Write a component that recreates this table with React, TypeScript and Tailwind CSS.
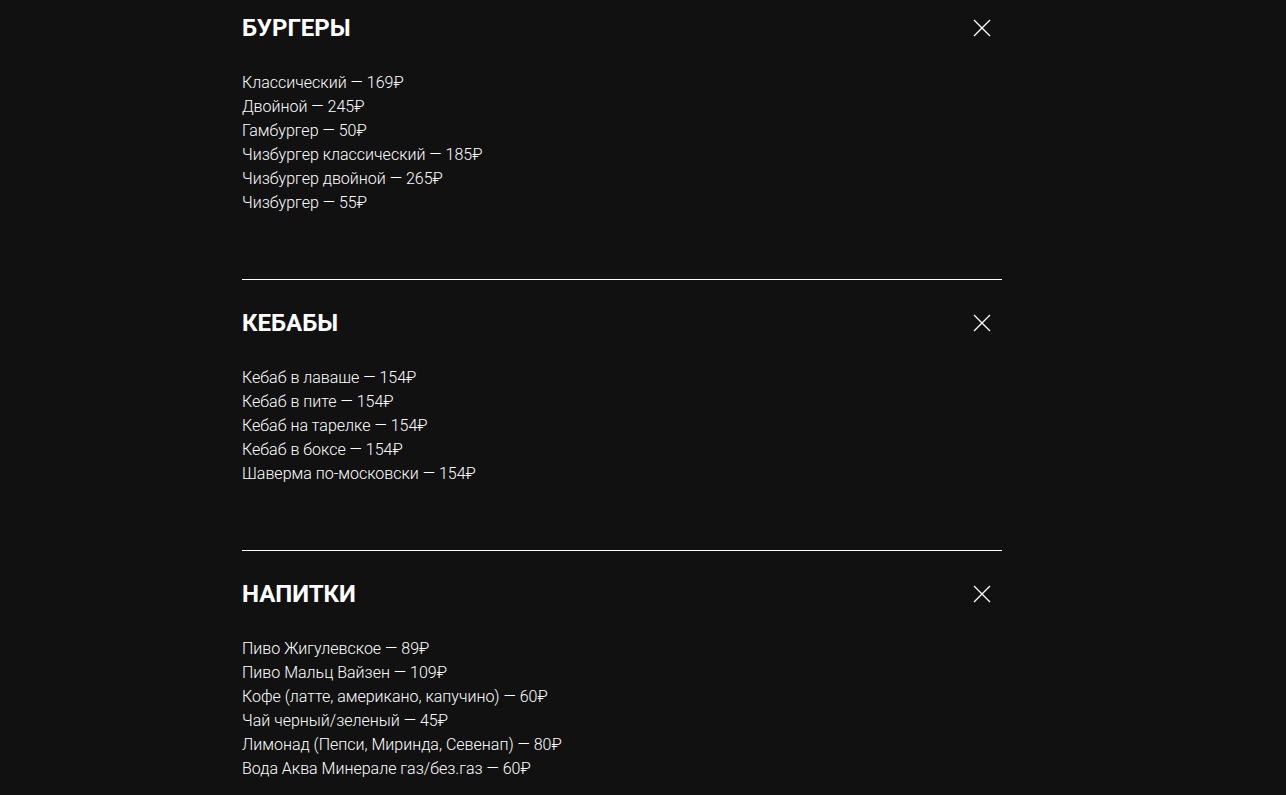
const menu = [
  {
    title: "БУРГЕРЫ",
    items: [
      "Классический — 169₽",
      "Двойной — 245₽",
      "Гамбургер — 50₽",
      "Чизбургер классический — 185₽",
      "Чизбургер двойной — 265₽",
      "Чизбургер — 55₽",
    ],
  },
  {
    title: "КЕБАБЫ",
    items: [
      "Кебаб в лаваше — 154₽",
      "Кебаб в пите — 154₽",
      "Кебаб на тарелке — 154₽",
      "Кебаб в боксе — 154₽",
      "Шаверма по-московски — 154₽",
    ],
  },
  {
    title: "НАПИТКИ",
    items: [
      "Пиво Жигулевское — 89₽",
      "Пиво Мальц Вайзен — 109₽",
      "Кофе (латте, американо, капучино) — 60₽",
      "Чай черный/зеленый — 45₽",
      "Лимонад (Пепси, Миринда, Севенап) — 80₽",
      "Вода Аква Минерале газ/без.газ — 60₽",
    ],
  },
]

function CloseIcon() {
  return (
    <svg width="20" height="20" viewBox="0 0 20 20" fill="none" stroke="white" strokeWidth="1.3">
      <path d="M2 2 L18 18 M18 2 L2 18" />
    </svg>
  )
}

export default function App() {
  return (
    <div className="min-h-[795px] bg-[#111111] text-white" style={{ fontFamily: "Roboto, 'Noto Sans', sans-serif" }}>
      <div className="ml-[242px] w-[760px]">
        {menu.map((section, i) => (
          <div
            key={section.title}
            className={i === 0 ? "pt-3 pb-16" : "border-t border-white pt-[27px] pb-16"}
          >
            {/* Header */}
            <div className="flex h-8 items-center justify-between">
              <h2 className="text-2xl font-bold leading-8">{section.title}</h2>
              <button className="mr-[10px] flex h-5 w-5 items-center justify-center">
                <CloseIcon />
              </button>
            </div>

            {/* Items */}
            <ul className="mt-[27px]">
              {section.items.map(item => (
                <li key={item} className="text-base font-light leading-6 text-white">
                  {item}
                </li>
              ))}
            </ul>
          </div>
        ))}
      </div>
    </div>
  )
}
